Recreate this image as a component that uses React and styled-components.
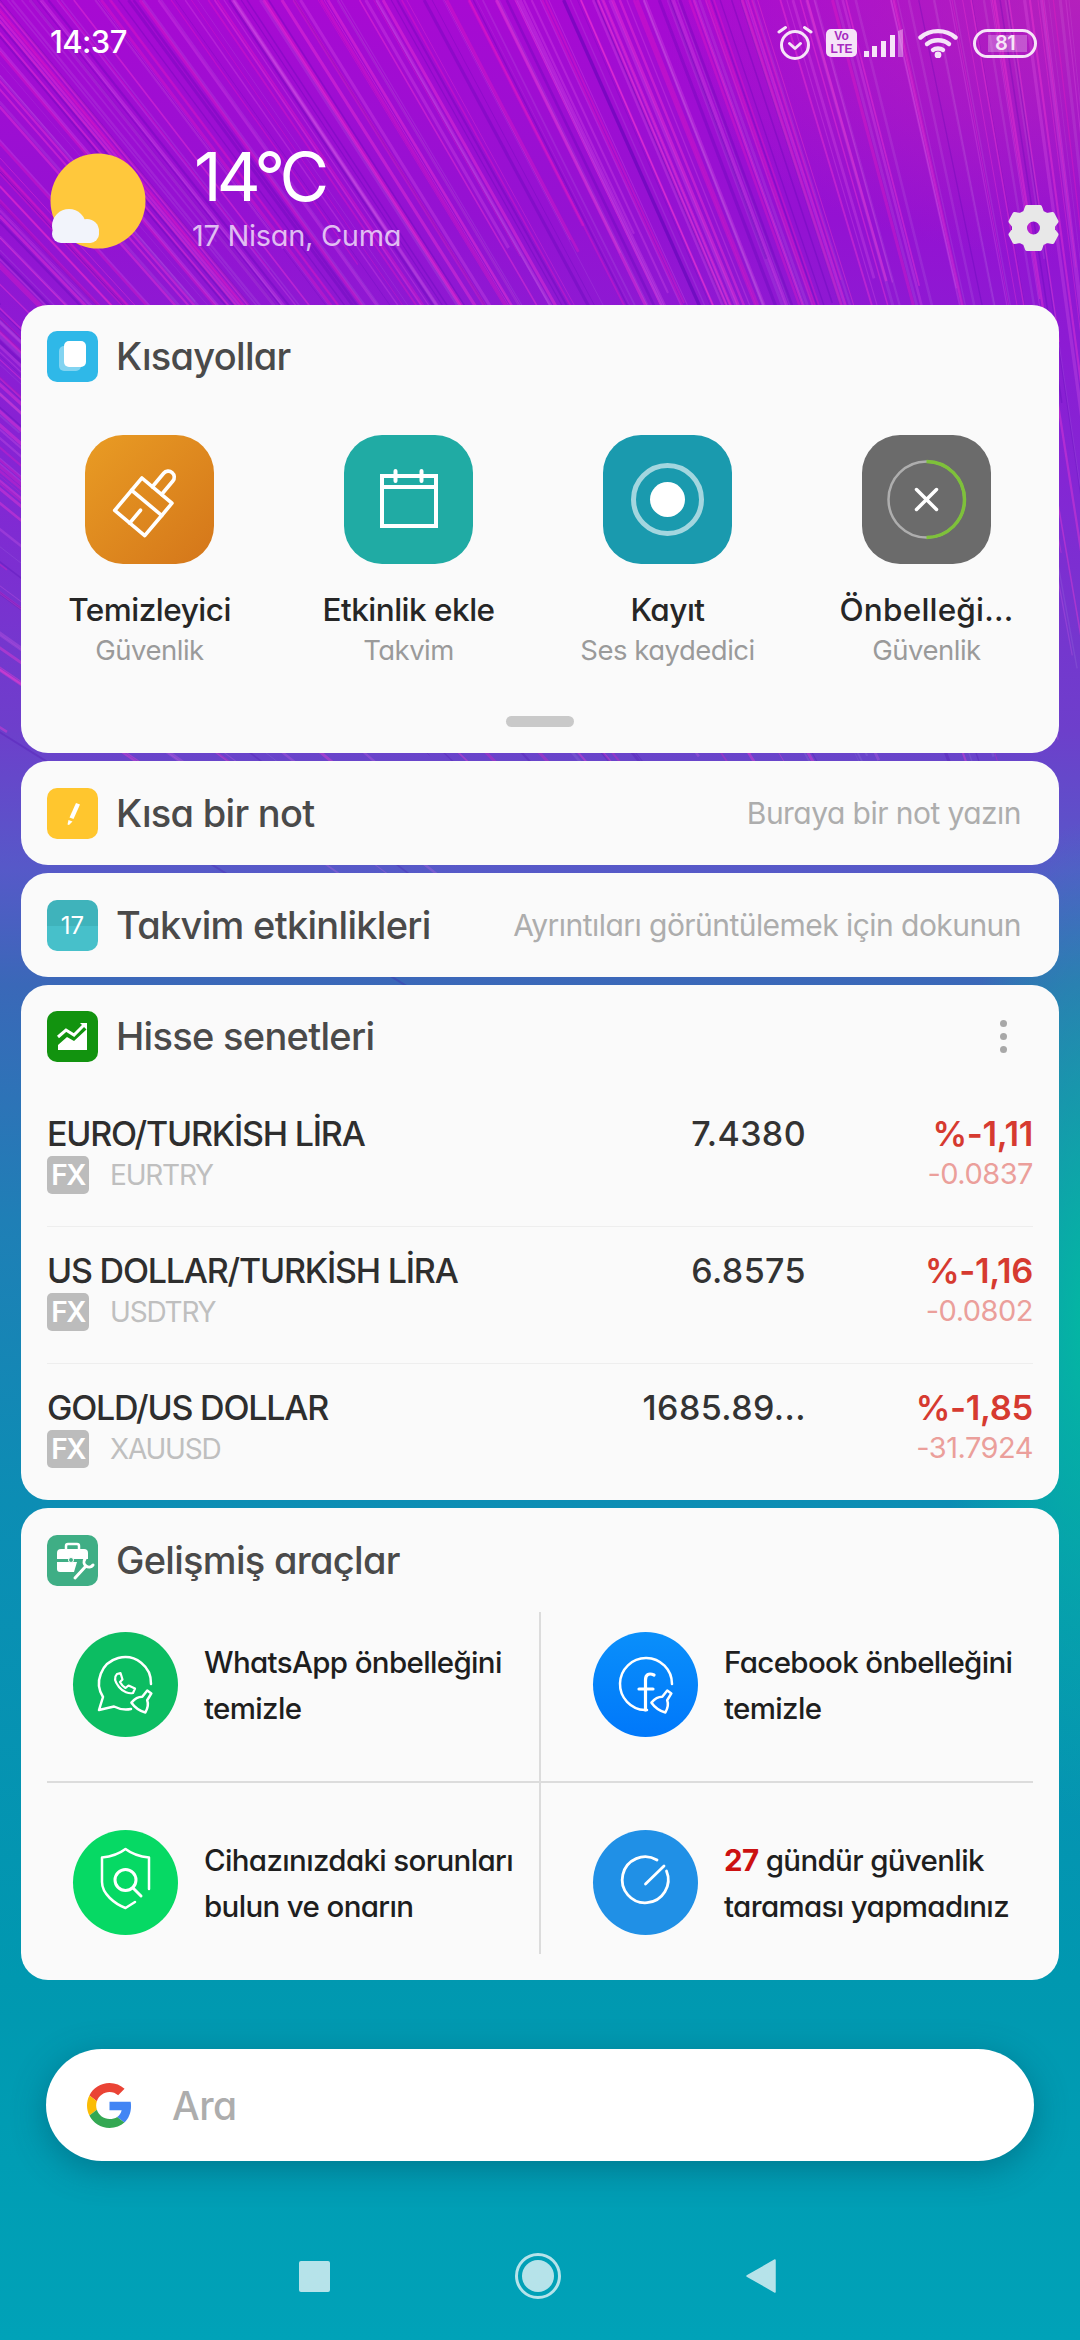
import React, { useMemo } from 'react';
import styled, { createGlobalStyle } from 'styled-components';

const GlobalStyle = createGlobalStyle`
  html, body {
    margin: 0;
    padding: 0;
    width: 1080px;
    height: 2340px;
    overflow: hidden;
  }
  body {
    font-family: Inter, "Noto Sans", sans-serif;
    font-feature-settings: "cv11" 1;
  }
`;

const Page = styled.div`
  position: relative;
  width: 1080px;
  height: 2340px;
  overflow: hidden;
  display: flex;
  flex-direction: column;
  background:
    radial-gradient(ellipse 150px 500px at 1090px 1320px, rgba(0, 190, 160, 0.9), rgba(0, 190, 160, 0) 100%),
    radial-gradient(ellipse 420px 260px at 1080px 0, rgba(190, 50, 170, 0.55), rgba(190, 50, 170, 0) 100%),
    linear-gradient(180deg, #a80ad2 0, #9412d2 220px, #8426d4 480px, #6d3fcb 730px, #5659c8 870px, #3a68b8 985px, #1f7fb6 1220px, #0c8db4 1500px, #0098b0 1980px, #00a2b8 2340px);
`;

const Wallpaper = styled.svg`
  position: absolute;
  top: 0;
  left: 0;
  pointer-events: none;
`;

const StatusBar = styled.div`
  position: relative;
  height: 84px;
  display: flex;
  align-items: flex-start;
  justify-content: space-between;
  padding: 24px 43px 0 50px;
  box-sizing: border-box;
`;

const Clock = styled.span`
  color: #fff;
  font-size: 31px;
  line-height: 36px;
  font-weight: 500;
  letter-spacing: -0.6px;
`;

const StatusIcons = styled.div`
  display: flex;
  align-items: center;
  height: 36px;
  margin-top: 1px;
`;

const VoLte = styled.div`
  width: 31px;
  height: 28px;
  margin: 0 7px 0 13px;
  border-radius: 5px;
  background: #f6e4f8;
  color: #a62ac0;
  font-family: "Liberation Sans", sans-serif;
  font-weight: 700;
  display: flex;
  flex-direction: column;
  align-items: center;
  font-size: 12px;
  line-height: 13px;
  padding-top: 1px;
  box-sizing: border-box;
`;

const Battery = styled.div`
  position: relative;
  width: 64px;
  height: 29px;
  margin-left: 15px;
  border: 3px solid #f6e4f8;
  border-radius: 15px;
  box-sizing: border-box;
  display: flex;
  align-items: center;
  padding-left: 19px;
  color: #f6e4f8;
  font-size: 20px;
  font-weight: 600;
`;

const BatteryFill = styled.div`
  position: absolute;
  left: 12px;
  top: 3px;
  bottom: 3px;
  width: 39px;
  background: rgba(255, 255, 255, 0.25);
`;

const BatteryLevel = styled.span`
  position: relative;
  letter-spacing: -0.5px;
`;

const Weather = styled.div`
  position: relative;
  height: 221px;
  display: flex;
  align-items: flex-start;
  padding: 69px 21px 0 50px;
  box-sizing: border-box;
`;

const WeatherText = styled.div`
  display: flex;
  flex-direction: column;
  margin-left: 46px;
  margin-top: -15px;
  flex: 1;
`;

const Temperature = styled.div`
  color: #fff;
  font-size: 68px;
  line-height: 76px;
  font-weight: 400;
  letter-spacing: -5px;
  margin-left: 2px;
`;

const DateLine = styled.div`
  color: rgba(255, 255, 255, 0.72);
  font-size: 29px;
  line-height: 34px;
  margin-top: 5px;
  letter-spacing: -0.3px;
`;

const GearWrap = styled.div`
  margin-top: 51px;
  line-height: 0;
`;

const Stack = styled.div`
  position: relative;
  display: flex;
  flex-direction: column;
  gap: 8px;
  padding: 0 21px;
`;

const Card = styled.section`
  background: #fafafa;
  border-radius: 27px;
  padding: ${(p) => p.$padding || '26px'};
`;

const NoteCard = styled.section`
  background: #fafafa;
  border-radius: 27px;
  height: 104px;
  padding: 0 38px 0 26px;
  box-sizing: border-box;
  display: flex;
  align-items: center;
`;

const CardHeader = styled.div`
  display: flex;
  align-items: center;
  height: 51px;
`;

const HeaderIcon = styled.div`
  width: 51px;
  height: 51px;
  border-radius: 10px;
  background: ${(p) => p.$bg};
  flex: none;
  line-height: 0;
  overflow: hidden;
`;

const DayIcon = styled(HeaderIcon)`
  background: linear-gradient(180deg, #3fb3bb 0, #3fb3bb 50%, #47c0ca 50%, #47c0ca 100%);
  display: flex;
  align-items: center;
  justify-content: center;
  color: #fff;
  font-size: 24px;
  line-height: 51px;
`;

const Title = styled.h2`
  margin: 0 0 0 18px;
  color: #4a4a4a;
  font-size: 38px;
  line-height: 51px;
  font-weight: 500;
  letter-spacing: -0.7px;
  white-space: nowrap;
  flex: 1;
`;

const Hint = styled.span`
  color: #adadad;
  font-size: 30px;
  white-space: nowrap;
  letter-spacing: -0.55px;
`;

const MoreDots = styled.div`
  display: flex;
  flex-direction: column;
  gap: 6px;
  margin-right: 26px;
`;

const Dot = styled.i`
  width: 7px;
  height: 7px;
  border-radius: 50%;
  background: #a8a8a8;
`;

const AppGrid = styled.div`
  display: grid;
  grid-template-columns: repeat(4, 259px);
  margin: 53px 0 0 -27px;
`;

const AppItem = styled.div`
  display: flex;
  flex-direction: column;
  align-items: center;
  min-width: 0;
`;

const AppIcon = styled.div`
  width: 129px;
  height: 129px;
  border-radius: 38px;
  background: ${(p) => p.$bg};
  line-height: 0;
`;

const AppName = styled.div`
  margin-top: 26px;
  color: #262626;
  font-size: 31.5px;
  line-height: 40px;
  font-weight: 500;
  letter-spacing: ${(p) => (p.$cut ? '0.2px' : '-0.5px')};
  white-space: nowrap;
`;

const AppSub = styled.div`
  margin-top: 3px;
  color: #9a9a9a;
  font-size: 27.5px;
  line-height: 34px;
  letter-spacing: -0.5px;
  white-space: nowrap;
`;

const Handle = styled.div`
  width: 68px;
  height: 11px;
  border-radius: 6px;
  background: #c9c9c9;
  margin: 49px auto 0;
`;

const StockRow = styled.div`
  height: 136px;
  border-bottom: ${(p) => (p.$last ? 'none' : '1px solid #eeeeee')};
  display: grid;
  grid-template-columns: 1fr 180px 227px;
`;

const StockList = styled.div`
  margin-top: 28px;
  margin-bottom: -26px;
`;

const Cell = styled.div`
  padding-top: 24px;
  display: flex;
  flex-direction: column;
  align-items: ${(p) => (p.$right ? 'flex-end' : 'flex-start')};
`;

const StockName = styled.div`
  color: #2e2e2e;
  font-size: 34px;
  line-height: 40px;
  font-weight: 500;
  letter-spacing: -1.2px;
  white-space: nowrap;
`;

const TickerLine = styled.div`
  display: flex;
  align-items: center;
  margin-top: 2px;
`;

const FxBadge = styled.span`
  width: 42px;
  height: 38px;
  border-radius: 5px;
  background: #bcbcbc;
  color: #fff;
  font-size: 28px;
  font-weight: 600;
  letter-spacing: -1.5px;
  display: flex;
  align-items: center;
  justify-content: center;
`;

const Ticker = styled.span`
  margin-left: 21px;
  color: #bfbfbf;
  font-size: 28px;
  letter-spacing: -1.2px;
`;

const Price = styled.div`
  color: #333333;
  font-size: 34px;
  line-height: 40px;
  font-weight: 500;
  letter-spacing: 0.4px;
  white-space: nowrap;
`;

const Percent = styled.div`
  color: #d63a30;
  font-size: 34.5px;
  line-height: 40px;
  font-weight: 600;
  letter-spacing: -0.3px;
`;

const Delta = styled.div`
  color: #eb9f9b;
  font-size: 29px;
  line-height: 38px;
  margin-top: 1px;
  letter-spacing: -0.5px;
`;

const ToolGrid = styled.div`
  display: grid;
  grid-template-columns: 494px 492px;
  grid-template-rows: 171px 171px;
  margin-top: 26px;
`;

const ToolCell = styled.div`
  display: flex;
  align-items: flex-start;
  padding: ${(p) => (p.$lower ? '47px' : '20px')} 0 0 ${(p) => (p.$second ? '52px' : '26px')};
  box-sizing: border-box;
  border-right: ${(p) => (p.$second ? 'none' : '2px solid #dcdcdc')};
  border-bottom: ${(p) => (p.$lower ? 'none' : '2px solid #dcdcdc')};
`;

const ToolCircle = styled.div`
  width: 105px;
  height: 105px;
  border-radius: 50%;
  background: ${(p) => p.$bg};
  flex: none;
  line-height: 0;
`;

const ToolText = styled.div`
  margin: 7px 0 0 26px;
  color: #1e1e1e;
  font-size: 29.5px;
  line-height: 46px;
  font-weight: 500;
  letter-spacing: -0.65px;
  white-space: nowrap;
`;

const Alert = styled.b`
  color: #cc1111;
  font-weight: 700;
`;

const SearchBar = styled.div`
  position: relative;
  height: 112px;
  margin: 69px 46px 0 46px;
  padding-left: 41px;
  border-radius: 56px;
  background: #fff;
  box-shadow: 0 8px 34px rgba(0, 70, 90, 0.42);
  display: flex;
  align-items: center;
`;

const SearchHint = styled.span`
  margin-left: 40px;
  color: #adadad;
  font-size: 39px;
  font-weight: 500;
  letter-spacing: -0.5px;
`;

const NavBar = styled.nav`
  position: relative;
  height: 50px;
  margin-top: 90px;
  padding-left: 299px;
  display: flex;
  align-items: center;
  gap: 185px;
`;

const Square = styled.div`
  width: 31px;
  height: 31px;
  border-radius: 2px;
  background: #b6e3ea;
`;

const pseudo = (seed) => {
  let s = seed;
  return () => {
    s = (s * 16807) % 2147483647;
    return (s - 1) / 2147483646;
  };
};

// streaks all run towards one point low on the right edge
const useStreaks = () =>
  useMemo(() => {
    const rnd = pseudo(4711);
    const out = [];
    const focus = { x: 1230, y: 1500 };
    const colours = [
      'rgba(255,60,210,0.36)',
      'rgba(255,255,255,0.08)',
      'rgba(70,0,170,0.22)',
      'rgba(240,110,235,0.22)',
      'rgba(255,30,190,0.28)',
    ];
    for (let i = 0; i < 300; i += 1) {
      const x1 = -500 + rnd() * 1600;
      const y1 = x1 < 0 ? -x1 * 0.9 * rnd() : 0;
      const len = 0.15 + rnd() * 0.4;
      out.push({
        x1,
        y1,
        x2: x1 + (focus.x - x1) * len,
        y2: y1 + (focus.y - y1) * len,
        w: 0.7 + rnd() * 2.6,
        c: colours[Math.floor(rnd() * colours.length)],
      });
    }
    return out;
  }, []);

const Alarm = () => (
  <svg width="36" height="36" viewBox="0 0 36 36" fill="none" stroke="#f6e4f8" strokeWidth="3" strokeLinecap="round" strokeLinejoin="round">
    <circle cx="18" cy="20" r="13.5" />
    <path d="M12.5 18.5 L18 23.5 L23.5 18.5" />
    <path d="M2 7 L8.5 2.5 M34 7 L27.5 2.5" />
  </svg>
);

const Signal = () => (
  <svg width="39" height="28" viewBox="0 0 39 28" fill="#f6e4f8">
    <rect x="0" y="22" width="5" height="6" />
    <rect x="8" y="17" width="5" height="11" />
    <rect x="17" y="12" width="5" height="16" />
    <rect x="26" y="6" width="5" height="22" />
    <path d="M34 2 L39 0 V28 H34 Z" opacity="0.4" />
  </svg>
);

const Wifi = () => (
  <svg width="40" height="30" viewBox="0 0 40 30" fill="none" stroke="#f6e4f8" strokeWidth="4.4" strokeLinecap="round" style={{ marginLeft: 15 }}>
    <path d="M2.5 9.5 C12 1 28 1 37.5 9.5" />
    <path d="M9 16 C15 11 25 11 31 16" />
    <path d="M15 22 C17.5 20 22.5 20 25 22" />
    <circle cx="20" cy="27" r="1.2" fill="#f6e4f8" />
  </svg>
);

const Sun = () => (
  <svg width="96" height="96" viewBox="0 0 96 96">
    <circle cx="48" cy="48" r="47.5" fill="#ffc83c" />
    <g fill="#f2f4fb">
      <circle cx="19" cy="73" r="17" />
      <circle cx="37" cy="78" r="12" />
      <rect x="2" y="72" width="47" height="18" rx="9" />
    </g>
  </svg>
);

const Gear = () => (
  <svg width="51" height="48" viewBox="0 0 51 48">
    <path
      fill="#e8e8e8"
      stroke="#e8e8e8"
      strokeWidth="4"
      strokeLinejoin="round"
      fillRule="evenodd"
      d="M19 3 H32 L34 8.5 L39 11 L44.5 10 L48.5 17.5 L45 22 V26 L48.5 30.5 L44.5 38 L39 37 L34 39.5 L32 45 H19 L17 39.5 L12 37 L6.5 38 L2.5 30.5 L6 26 V22 L2.5 17.5 L6.5 10 L12 11 L17 8.5 Z M25.5 15.5 A8.5 8.5 0 1 0 25.5 32.5 A8.5 8.5 0 1 0 25.5 15.5 Z"
    />
  </svg>
);

const BrushGlyph = () => (
  <svg width="129" height="129" viewBox="0 0 129 129" fill="none" stroke="#fff" strokeWidth="4.5" strokeLinejoin="round" strokeLinecap="round">
    <g transform="translate(64.5 64.5) rotate(40) scale(0.8) translate(-64.5 -64.5)">
      <path d="M57 50 V28 a7.5 7.5 0 0 1 15 0 V50" />
      <rect x="40" y="50" width="49" height="20" />
      <path d="M40 70 V103 H89 V70" />
      <path d="M64.5 82 V103" />
    </g>
  </svg>
);

const CalendarGlyph = () => (
  <svg width="129" height="129" viewBox="0 0 129 129" fill="none" stroke="#fff" strokeWidth="4">
    <rect x="38" y="41" width="54" height="50" />
    <path d="M38 52 H92" />
    <path d="M51.5 36 V46 M77.5 36 V46" strokeLinecap="round" />
  </svg>
);

const RecordGlyph = () => (
  <svg width="129" height="129" viewBox="0 0 129 129" fill="none">
    <circle cx="64.5" cy="64.5" r="34" stroke="#fff" strokeOpacity="0.6" strokeWidth="5" />
    <circle cx="64.5" cy="64.5" r="17.5" fill="#fff" />
  </svg>
);

const CacheGlyph = () => (
  <svg width="129" height="129" viewBox="0 0 129 129" fill="none">
    <circle cx="64.5" cy="64.5" r="38" stroke="#aeaeae" strokeWidth="2.5" />
    <path d="M64.5 26.5 A38 38 0 0 1 64.5 102.5" stroke="#7ec13a" strokeWidth="3.5" />
    <path d="M54.5 54.5 L74.5 74.5 M74.5 54.5 L54.5 74.5" stroke="#fff" strokeWidth="3.5" strokeLinecap="round" />
  </svg>
);

const ShortcutsMark = () => (
  <svg width="51" height="51" viewBox="0 0 51 51">
    <rect x="12" y="15" width="22" height="25" rx="5" fill="#fff" fillOpacity="0.4" />
    <rect x="17" y="10" width="22" height="26" rx="5" fill="#fff" />
  </svg>
);

const PencilMark = () => (
  <svg width="51" height="51" viewBox="0 0 51 51" fill="#fff">
    <path d="M29 15 L33 16.5 L26.5 31 L22.5 29.5 Z" />
    <path d="M21.5 32 L25.5 33.5 L22 37 L20.5 36.5 Z" />
  </svg>
);

const ChartMark = () => (
  <svg width="51" height="51" viewBox="0 0 51 51" fill="none">
    <path d="M11 34 L20 26 L27 30 L40 18 V39 H11 Z" fill="#fff" />
    <path d="M11 26 L19 19 L27 24 L37 14" stroke="#fff" strokeWidth="3" />
    <path d="M33 12 H40 V19 Z" fill="#fff" />
  </svg>
);

const ToolsMark = () => (
  <svg width="51" height="51" viewBox="0 0 51 51" fill="none">
    <path d="M19 14 V11 a2 2 0 0 1 2-2 H30 a2 2 0 0 1 2 2 V14" stroke="#fff" strokeWidth="2.5" />
    <path d="M10 18 a4 4 0 0 1 4-4 H37 a4 4 0 0 1 4 4 V24 H10 Z" fill="#fff" />
    <path d="M10 27 H30 L27 37 H13 a3 3 0 0 1-3-3 Z" fill="#fff" />
    <circle cx="24" cy="25" r="2.5" fill="#3fae85" stroke="#fff" />
    <path d="M28 43 L39 31 M38 24 a5 5 0 0 0 1 7 a5 5 0 0 0 7 -1" stroke="#fff" strokeWidth="3" strokeLinecap="round" />
  </svg>
);

// small bell shaped broom that sits on the ring of the cache icons
const Broom = ({ x, y, fill }) => (
  <g transform={`translate(${x} ${y}) rotate(35)`} fill={fill} stroke="#fff" strokeWidth="2.5" strokeLinejoin="round">
    <path d="M-2.5 -11 H2.5 L3 -3 C6 -1 8 3 8.5 8 C3 10 -3 10 -8.5 8 C-8 3 -6 -1 -3 -3 Z" />
  </g>
);

const WhatsAppGlyph = () => (
  <svg width="105" height="105" viewBox="0 0 105 105" fill="none" stroke="#fff" strokeWidth="2.5" strokeLinecap="round" strokeLinejoin="round">
    <path d="M78 52 A26 26 0 1 0 30 65 L26 78 L41 74.5 A26 26 0 0 0 58 77" />
    <path d="M44 42 C41 45 42 50 46 55 C50 60 56 62 60 61 L62 56.5 L55.5 53.5 L52.5 56 C50 54.5 48 52 47 50 L49.5 47.5 L47.5 41 Z" strokeWidth="2.2" />
    <Broom x={70} y={69} fill="#0cbd62" />
  </svg>
);

const FacebookGlyph = () => (
  <svg width="105" height="105" viewBox="0 0 105 105" fill="none" stroke="#fff" strokeWidth="2.5" strokeLinecap="round" strokeLinejoin="round">
    <path d="M79 52 A26 26 0 1 0 52 78 H54" />
    <path d="M61 43 C55.5 40.5 52.5 43 52.5 48 V78 M46 57 H60" strokeWidth="3.2" />
    <Broom x={70} y={69} fill="#0b7dfa" />
  </svg>
);

const ShieldGlyph = () => (
  <svg width="105" height="105" viewBox="0 0 105 105" fill="none" stroke="#fff" strokeWidth="2.5" strokeLinecap="round" strokeLinejoin="round">
    <path d="M76 59 V27.5 C66 26.5 59 24 52.5 19 C46 24 39 26.5 29 27.5 V52 C29 64 42 74 52.5 78 L62 72" />
    <circle cx="52.5" cy="50" r="10.5" strokeWidth="3" />
    <path d="M60 58 L68 66" strokeWidth="3" />
  </svg>
);

const ScanGlyph = () => (
  <svg width="105" height="105" viewBox="0 0 105 105" fill="none" stroke="#fff" strokeWidth="2.8" strokeLinecap="round" strokeLinejoin="round">
    <path d="M64 30 A23 23 0 1 0 73.5 41" />
    <path d="M52.5 54 L71 36" />
  </svg>
);

const GoogleLogo = () => (
  <svg width="45" height="45" viewBox="0 0 48 48">
    <path fill="#ea4335" d="M24 9.5c3.54 0 6.71 1.22 9.21 3.6l6.85-6.85C35.9 2.38 30.47 0 24 0 14.62 0 6.51 5.38 2.56 13.22l7.98 6.19C12.43 13.72 17.74 9.5 24 9.5z" />
    <path fill="#4285f4" d="M46.98 24.55c0-1.57-.15-3.09-.38-4.55H24v9.02h12.94c-.58 2.96-2.26 5.48-4.78 7.18l7.73 6c4.51-4.18 7.09-10.36 7.09-17.65z" />
    <path fill="#fbbc05" d="M10.53 28.59c-.48-1.45-.76-2.99-.76-4.59s.27-3.14.76-4.59l-7.98-6.19C.92 16.46 0 20.12 0 24c0 3.88.92 7.54 2.56 10.78l7.97-6.19z" />
    <path fill="#34a853" d="M24 48c6.48 0 11.93-2.13 15.89-5.81l-7.73-6c-2.15 1.45-4.92 2.3-8.16 2.3-6.26 0-11.57-4.22-13.47-9.91l-7.98 6.19C6.51 42.62 14.62 48 24 48z" />
  </svg>
);

const HomeKey = () => (
  <svg width="46" height="46" viewBox="0 0 46 46" fill="none">
    <circle cx="23" cy="23" r="21.5" stroke="#b6e3ea" strokeWidth="3" />
    <circle cx="23" cy="23" r="16" fill="#b6e3ea" />
  </svg>
);

const BackKey = () => (
  <svg width="30" height="34" viewBox="0 0 30 34">
    <path d="M29 1 V33 L1 17 Z" fill="#b6e3ea" stroke="#b6e3ea" strokeWidth="1.5" strokeLinejoin="round" />
  </svg>
);

const apps = [
  { name: 'Temizleyici', sub: 'Güvenlik', bg: 'linear-gradient(135deg, #e99c24, #d4761a)', glyph: <BrushGlyph /> },
  { name: 'Etkinlik ekle', sub: 'Takvim', bg: '#20aba4', glyph: <CalendarGlyph /> },
  { name: 'Kayıt', sub: 'Ses kaydedici', bg: '#1a9aae', glyph: <RecordGlyph /> },
  { name: 'Önbelleği...', sub: 'Güvenlik', bg: '#6b6b6b', glyph: <CacheGlyph />, cut: true },
];

const stocks = [
  { name: 'EURO/TURKİSH LİRA', ticker: 'EURTRY', price: '7.4380', percent: '%-1,11', delta: '-0.0837' },
  { name: 'US DOLLAR/TURKİSH LİRA', ticker: 'USDTRY', price: '6.8575', percent: '%-1,16', delta: '-0.0802' },
  { name: 'GOLD/US DOLLAR', ticker: 'XAUUSD', price: '1685.89...', percent: '%-1,85', delta: '-31.7924' },
];

export default function App() {
  const streaks = useStreaks();

  return (
    <>
      <GlobalStyle />
      <Page>
        <Wallpaper width="1080" height="1000" viewBox="0 0 1080 1000">
          {streaks.map((s, i) => (
            <line key={i} x1={s.x1} y1={s.y1} x2={s.x2} y2={s.y2} stroke={s.c} strokeWidth={s.w} />
          ))}
        </Wallpaper>

        <StatusBar>
          <Clock>14:37</Clock>
          <StatusIcons>
            <Alarm />
            <VoLte>
              <span>Vo</span>
              <span>LTE</span>
            </VoLte>
            <Signal />
            <Wifi />
            <Battery>
              <BatteryFill />
              <BatteryLevel>81</BatteryLevel>
            </Battery>
          </StatusIcons>
        </StatusBar>

        <Weather>
          <Sun />
          <WeatherText>
            <Temperature>14°C</Temperature>
            <DateLine>17 Nisan, Cuma</DateLine>
          </WeatherText>
          <GearWrap>
            <Gear />
          </GearWrap>
        </Weather>

        <Stack>
          <Card>
            <CardHeader>
              <HeaderIcon $bg="#2fb8e8">
                <ShortcutsMark />
              </HeaderIcon>
              <Title>Kısayollar</Title>
            </CardHeader>
            <AppGrid>
              {apps.map((app) => (
                <AppItem key={app.name}>
                  <AppIcon $bg={app.bg}>{app.glyph}</AppIcon>
                  <AppName $cut={app.cut}>{app.name}</AppName>
                  <AppSub>{app.sub}</AppSub>
                </AppItem>
              ))}
            </AppGrid>
            <Handle />
          </Card>

          <NoteCard>
            <HeaderIcon $bg="#ffc62e">
              <PencilMark />
            </HeaderIcon>
            <Title>Kısa bir not</Title>
            <Hint>Buraya bir not yazın</Hint>
          </NoteCard>

          <NoteCard>
            <DayIcon>17</DayIcon>
            <Title>Takvim etkinlikleri</Title>
            <Hint>Ayrıntıları görüntülemek için dokunun</Hint>
          </NoteCard>

          <Card>
            <CardHeader>
              <HeaderIcon $bg="#12930f">
                <ChartMark />
              </HeaderIcon>
              <Title>Hisse senetleri</Title>
              <MoreDots>
                <Dot />
                <Dot />
                <Dot />
              </MoreDots>
            </CardHeader>
            <StockList>
              {stocks.map((stock, i) => (
                <StockRow key={stock.ticker} $last={i === stocks.length - 1}>
                  <Cell>
                    <StockName>{stock.name}</StockName>
                    <TickerLine>
                      <FxBadge>FX</FxBadge>
                      <Ticker>{stock.ticker}</Ticker>
                    </TickerLine>
                  </Cell>
                  <Cell $right>
                    <Price>{stock.price}</Price>
                  </Cell>
                  <Cell $right>
                    <Percent>{stock.percent}</Percent>
                    <Delta>{stock.delta}</Delta>
                  </Cell>
                </StockRow>
              ))}
            </StockList>
          </Card>

          <Card $padding="27px 26px 26px">
            <CardHeader>
              <HeaderIcon $bg="#3fae85">
                <ToolsMark />
              </HeaderIcon>
              <Title>Gelişmiş araçlar</Title>
            </CardHeader>
            <ToolGrid>
              <ToolCell>
                <ToolCircle $bg="#0cbd62">
                  <WhatsAppGlyph />
                </ToolCircle>
                <ToolText>
                  WhatsApp önbelleğini
                  <br />
                  temizle
                </ToolText>
              </ToolCell>
              <ToolCell $second>
                <ToolCircle $bg="linear-gradient(180deg, #0a8ffa, #0078fa)">
                  <FacebookGlyph />
                </ToolCircle>
                <ToolText>
                  Facebook önbelleğini
                  <br />
                  temizle
                </ToolText>
              </ToolCell>
              <ToolCell $lower>
                <ToolCircle $bg="#06d964">
                  <ShieldGlyph />
                </ToolCircle>
                <ToolText>
                  Cihazınızdaki sorunları
                  <br />
                  bulun ve onarın
                </ToolText>
              </ToolCell>
              <ToolCell $lower $second>
                <ToolCircle $bg="#2090e6">
                  <ScanGlyph />
                </ToolCircle>
                <ToolText>
                  <Alert>27</Alert> gündür güvenlik
                  <br />
                  taraması yapmadınız
                </ToolText>
              </ToolCell>
            </ToolGrid>
          </Card>
        </Stack>

        <SearchBar>
          <GoogleLogo />
          <SearchHint>Ara</SearchHint>
        </SearchBar>

        <NavBar>
          <Square />
          <HomeKey />
          <BackKey />
        </NavBar>
      </Page>
    </>
  );
}
